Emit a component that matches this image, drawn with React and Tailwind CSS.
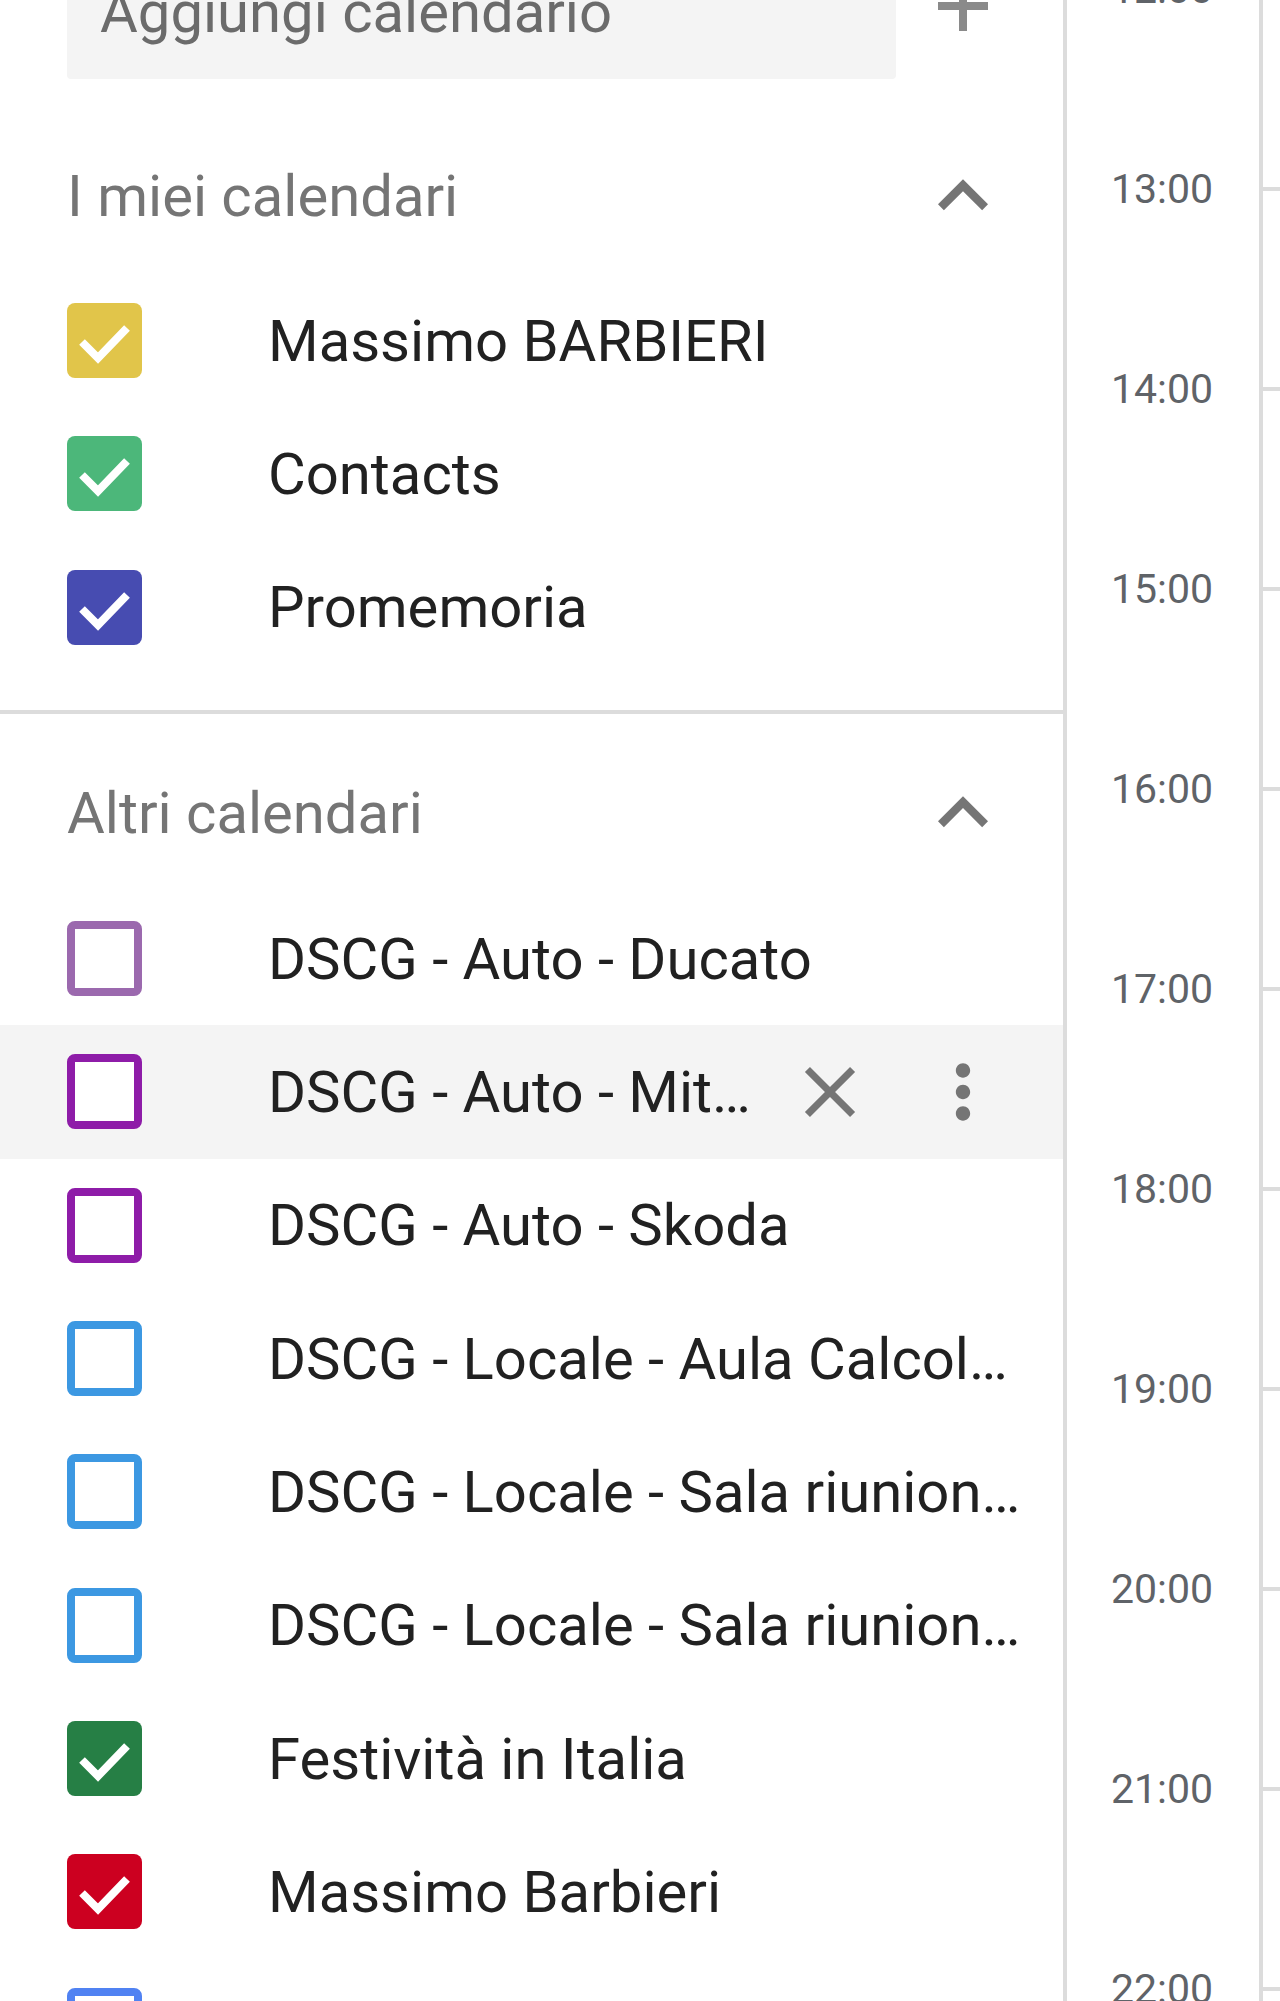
import React from 'react';

const myCalendars = [
  { name: 'Massimo BARBIERI', color: '#e1c54a', checked: true },
  { name: 'Contacts', color: '#4cb77a', checked: true },
  { name: 'Promemoria', color: '#474cb1', checked: true },
];

const otherCalendars = [
  { name: 'DSCG - Auto - Ducato', color: '#9b69ae', checked: false },
  { name: 'DSCG - Auto - Mitsubishi', color: '#8e1ca8', checked: false, hover: true },
  { name: 'DSCG - Auto - Skoda', color: '#8e1ca8', checked: false },
  { name: 'DSCG - Locale - Aula Calcolatori', color: '#3c98e2', checked: false },
  { name: 'DSCG - Locale - Sala riunioni 1', color: '#3c98e2', checked: false },
  { name: 'DSCG - Locale - Sala riunioni 2', color: '#3c98e2', checked: false },
  { name: 'Festività in Italia', color: '#267f45', checked: true },
  { name: 'Massimo Barbieri', color: '#cc0020', checked: true },
  { name: 'Compleanni', color: '#5082f2', checked: false },
];

const hours = ['12:00', '13:00', '14:00', '15:00', '16:00', '17:00', '18:00', '19:00', '20:00', '21:00', '22:00'];

function Checkbox({ color, checked }) {
  if (checked) {
    return (
      <div className="w-[75px] h-[75px] rounded-[8px] shrink-0" style={{ backgroundColor: color }}>
        <svg viewBox="0 0 75 75" className="w-full h-full">
          <polyline points="15,39 31,55 60,25" fill="none" stroke="#fff" strokeWidth="8" />
        </svg>
      </div>
    );
  }
  return (
    <div
      className="w-[75px] h-[75px] rounded-[8px] border-[8px] bg-white shrink-0"
      style={{ borderColor: color }}
    />
  );
}

function ChevronUp() {
  return (
    <svg viewBox="0 0 24 24" className="w-[100px] h-[100px]" fill="#757575">
      <path d="M12 8l-6 6 1.41 1.41L12 10.83l4.59 4.58L18 14z" />
    </svg>
  );
}

function CalendarRow({ cal }) {
  return (
    <div
      className={
        'flex items-center h-[133.33px] pl-[67px] ' +
        (cal.hover ? 'bg-[#f4f4f4] pr-[50px]' : 'pr-[38px]')
      }
    >
      <Checkbox color={cal.color} checked={cal.checked} />
      <span className="ml-[126px] flex-1 min-w-0 truncate text-[58px] leading-none text-[#212121]">
        {cal.name}
      </span>
      {cal.hover && (
        <>
          <div className="w-[100px] h-[100px] flex items-center justify-center shrink-0">
            <svg viewBox="0 0 24 24" className="w-[86px] h-[86px]" fill="#757575">
              <path d="M19 6.41L17.59 5 12 10.59 6.41 5 5 6.41 10.59 12 5 17.59 6.41 19 12 13.41 17.59 19 19 17.59 13.41 12z" />
            </svg>
          </div>
          <div className="w-[100px] h-[100px] ml-[33px] flex items-center justify-center shrink-0">
            <svg viewBox="0 0 24 24" className="w-[86px] h-[86px]" fill="#757575">
              <path d="M12 8c1.1 0 2-.9 2-2s-.9-2-2-2-2 .9-2 2 .9 2 2 2zm0 2c-1.1 0-2 .9-2 2s.9 2 2 2 2-.9 2-2-.9-2-2-2zm0 6c-1.1 0-2 .9-2 2s.9 2 2 2 2-.9 2-2-.9-2-2-2z" />
            </svg>
          </div>
        </>
      )}
    </div>
  );
}

function Section({ title, items, divider }) {
  return (
    <div className={divider ? 'pt-[33px] pb-[36px] border-b-4 border-[#dcdcdc]' : 'pt-[33px] pb-[33px]'}>
      <div className="flex items-center h-[133px] mb-[12px] pl-[67px] pr-[50px]">
        <span className="flex-1 text-[58px] leading-none text-[#757575]">{title}</span>
        <ChevronUp />
      </div>
      {items.map((cal, i) => (
        <CalendarRow key={i} cal={cal} />
      ))}
    </div>
  );
}

export default function App() {
  return (
    <div className="flex w-[1280px] h-[2001px] overflow-hidden bg-white font-['Roboto',sans-serif]">
      {/* Sidebar */}
      <aside className="w-[1067px] shrink-0 border-r-4 border-[#dcdcdc]">
        <div className="flex items-center h-[172px] -mt-[93px] mb-[17px]">
          <div className="ml-[67px] w-[829px] h-full bg-[#f4f4f4] rounded-[4px] flex items-end pl-[33px] pb-[38px]">
            <span className="text-[58px] leading-none text-[#6b6b6b]">Aggiungi calendario</span>
          </div>
          <div className="w-[134px] flex justify-center mt-[26px]">
            <svg viewBox="0 0 50 50" className="w-[50px] h-[50px]" fill="#8a8a8a">
              <rect x="21" y="0" width="8" height="50" />
              <rect x="0" y="21" width="50" height="8" />
            </svg>
          </div>
        </div>
        <Section title="I miei calendari" items={myCalendars} divider />
        <Section title="Altri calendari" items={otherCalendars} />
      </aside>

      {/* Time column */}
      <div className="w-[196px] shrink-0 border-r-4 border-[#dcdcdc]">
        <div className="-mt-[111px]">
          {hours.map((h) => (
            <div key={h} className="h-[200px] flex items-center justify-end pr-[46px]">
              <span className="text-[41px] leading-none text-[#5f6368]">{h}</span>
            </div>
          ))}
        </div>
      </div>

      {/* Grid edge */}
      <div className="flex-1">
        <div className="-mt-[111px]">
          {hours.map((h) => (
            <div key={h} className="h-[200px] flex items-center">
              <div className="h-[4px] w-full bg-[#dcdcdc]" />
            </div>
          ))}
        </div>
      </div>
    </div>
  );
}
